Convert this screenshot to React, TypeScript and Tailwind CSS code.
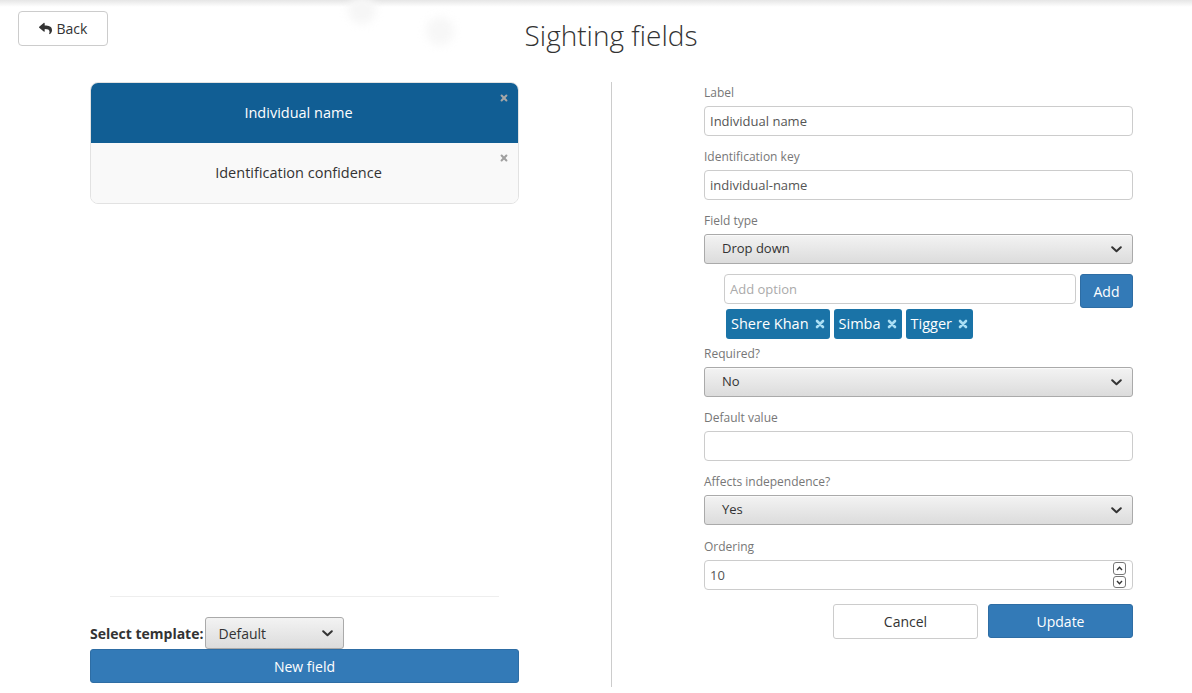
import React from "react";
import { FaReply } from "react-icons/fa";

const font = { fontFamily: '"Open Sans", "Liberation Sans", sans-serif' };

function Chevron({ className = "" }: { className?: string }) {
  return (
    <svg width="11" height="7" viewBox="0 0 11 7" className={className}>
      <polyline points="1.2,1.2 5.5,5.3 9.8,1.2" fill="none" stroke="#333" strokeWidth="2" strokeLinecap="round" strokeLinejoin="round" />
    </svg>
  );
}

function SmallX({ color, size = 9 }: { color: string; size?: number }) {
  return (
    <svg width={size} height={size} viewBox="0 0 10 10">
      <path d="M2 2 L8 8 M8 2 L2 8" stroke={color} strokeWidth="2.6" strokeLinecap="round" />
    </svg>
  );
}

function Label({ children }: { children: React.ReactNode }) {
  return <div className="text-[12px] leading-[17px] h-[17px] mb-[5px] text-[#777]">{children}</div>;
}

function TextInput({ value, placeholder }: { value?: string; placeholder?: string }) {
  return (
    <div className="h-[30px] border border-[#ccc] rounded-[4px] bg-white flex items-center px-[5px] pt-[1px] text-[13px] text-[#555]">
      {value ? <span>{value}</span> : <span className="text-[#aaa]">{placeholder}</span>}
    </div>
  );
}

function SelectBox({ value }: { value: string }) {
  return (
    <div className="h-[30px] border border-[#aaa] rounded-[3px] bg-gradient-to-b from-[#f3f3f3] to-[#dcdcdc] flex items-center justify-between pl-[17px] pr-[10px] text-[13px] text-[#333] shadow-[inset_0_1px_0_rgba(255,255,255,0.6)]">
      <span>{value}</span>
      <Chevron />
    </div>
  );
}

function Tag({ text }: { text: string }) {
  return (
    <div className="h-[30px] bg-[#1a73a7] rounded-[3px] flex items-center gap-[6px] px-[5px] text-[14.5px] text-white">
      <span>{text}</span>
      <SmallX color="#a9def4" size={10} />
    </div>
  );
}

export default function App() {
  return (
    <div className="relative w-[1192px] h-[693px] bg-white text-[#333] overflow-hidden" style={font}>
      <div className="absolute top-0 inset-x-0 h-[7px] bg-gradient-to-b from-[#e6e6e6] to-white pointer-events-none" />
      <div className="absolute left-[348px] top-[-4px] w-[28px] h-[28px] rounded-full bg-[#f6f6f6] blur-[4px] pointer-events-none" />
      <div className="absolute left-[426px] top-[17px] w-[28px] h-[28px] rounded-full bg-[#f7f7f7] blur-[4px] pointer-events-none" />

      {/* header */}
      <div className="relative flex h-[82px]">
        <div className="w-[611px] pl-[18px] pt-[11px]">
          <button className="w-[90px] h-[35px] border border-[#ccc] rounded-[4px] bg-white flex items-center justify-center gap-[5px] text-[14px] text-[#333]">
            <FaReply size={13} className="text-[#333]" />
            <span>Back</span>
          </button>
        </div>
        <div className="w-0 flex justify-center">
          <h1 className="whitespace-nowrap text-[28px] font-light leading-[33px] mt-[19px] text-[#333]">Sighting fields</h1>
        </div>
      </div>

      {/* body */}
      <div className="flex h-[605px]">
        {/* left column */}
        <div className="ml-[90px] w-[429px] flex flex-col pb-[4px]">
          <div className="border border-[#e2e2e2] rounded-[8px] overflow-hidden">
            <div className="relative h-[60px] bg-[#115e94] flex items-center justify-center pr-[12px] text-white text-[14.5px]">
              Individual name
              <span className="absolute right-[10px] top-[11px]"><SmallX color="#a7a7a7" size={8} /></span>
            </div>
            <div className="relative h-[60px] bg-[#f9f9f9] flex items-center justify-center pr-[12px] text-[14.5px] text-[#333]">
              Identification confidence
              <span className="absolute right-[10px] top-[11px]"><SmallX color="#a0a0a0" size={8} /></span>
            </div>
          </div>
          <div className="flex-1" />
          <div className="mx-[20px] border-t border-[#eee]" />
          <div className="mt-[20px] flex items-end h-[32px]">
            <span className="text-[14px] font-bold text-[#333] mb-[5px]">Select template:</span>
            <div className="ml-[2px] w-[139px] h-[32px] border border-[#aaa] rounded-[3px] bg-gradient-to-b from-[#f3f3f3] to-[#dcdcdc] flex items-center justify-between pl-[12px] pr-[10px] text-[14px] text-[#333]">
              <span>Default</span>
              <Chevron />
            </div>
          </div>
          <button className="h-[34px] bg-[#337ab7] border border-[#2e6da4] rounded-[3px] text-white text-[14px]">New field</button>
        </div>

        {/* divider */}
        <div className="ml-[92px] w-px bg-[#ccc]" />

        {/* right column */}
        <div className="ml-[92px] w-[429px] pt-[2px]">
          <Label>Label</Label>
          <TextInput value="Individual name" />
          <div className="h-[12px]" />
          <Label>Identification key</Label>
          <TextInput value="individual-name" />
          <div className="h-[12px]" />
          <Label>Field type</Label>
          <SelectBox value="Drop down" />
          <div className="mt-[10px] pl-[20px]">
            <div className="flex gap-[4px] h-[34px]">
              <div className="flex-1">
                <TextInput placeholder="Add option" />
              </div>
              <button className="w-[53px] h-[34px] bg-[#337ab7] border border-[#2e6da4] rounded-[3px] text-white text-[14px]">Add</button>
            </div>
            <div className="mt-[1px] ml-[2px] flex gap-[4px]">
              <Tag text="Shere Khan" />
              <Tag text="Simba" />
              <Tag text="Tigger" />
            </div>
          </div>
          <div className="h-[6px]" />
          <Label>Required?</Label>
          <SelectBox value="No" />
          <div className="h-[12px]" />
          <Label>Default value</Label>
          <TextInput />
          <div className="h-[12px]" />
          <Label>Affects independence?</Label>
          <SelectBox value="Yes" />
          <div className="h-[13px]" />
          <Label>Ordering</Label>
          <div className="h-[30px] border border-[#ccc] rounded-[4px] bg-white flex items-center justify-between pl-[5px] pr-[6px] text-[13px] text-[#555]">
            <span className="pt-[1px]">10</span>
            <div className="flex flex-col gap-[1px]">
              <div className="w-[13px] h-[13px] border border-[#777] rounded-[3px] flex items-center justify-center">
                <svg width="7" height="5" viewBox="0 0 7 5"><polyline points="1,4 3.5,1.3 6,4" fill="none" stroke="#333" strokeWidth="1.4" /></svg>
              </div>
              <div className="w-[13px] h-[12px] border border-[#777] rounded-[3px] flex items-center justify-center">
                <svg width="7" height="5" viewBox="0 0 7 5"><polyline points="1,1 3.5,3.7 6,1" fill="none" stroke="#333" strokeWidth="1.4" /></svg>
              </div>
            </div>
          </div>
          <div className="mt-[14px] flex justify-end gap-[10px]">
            <button className="w-[145px] h-[35px] border border-[#ccc] rounded-[3px] bg-white text-[14px] text-[#333]">Cancel</button>
            <button className="w-[145px] h-[34px] bg-[#337ab7] border border-[#2e6da4] rounded-[3px] text-white text-[14px]">Update</button>
          </div>
        </div>
      </div>
    </div>
  );
}
